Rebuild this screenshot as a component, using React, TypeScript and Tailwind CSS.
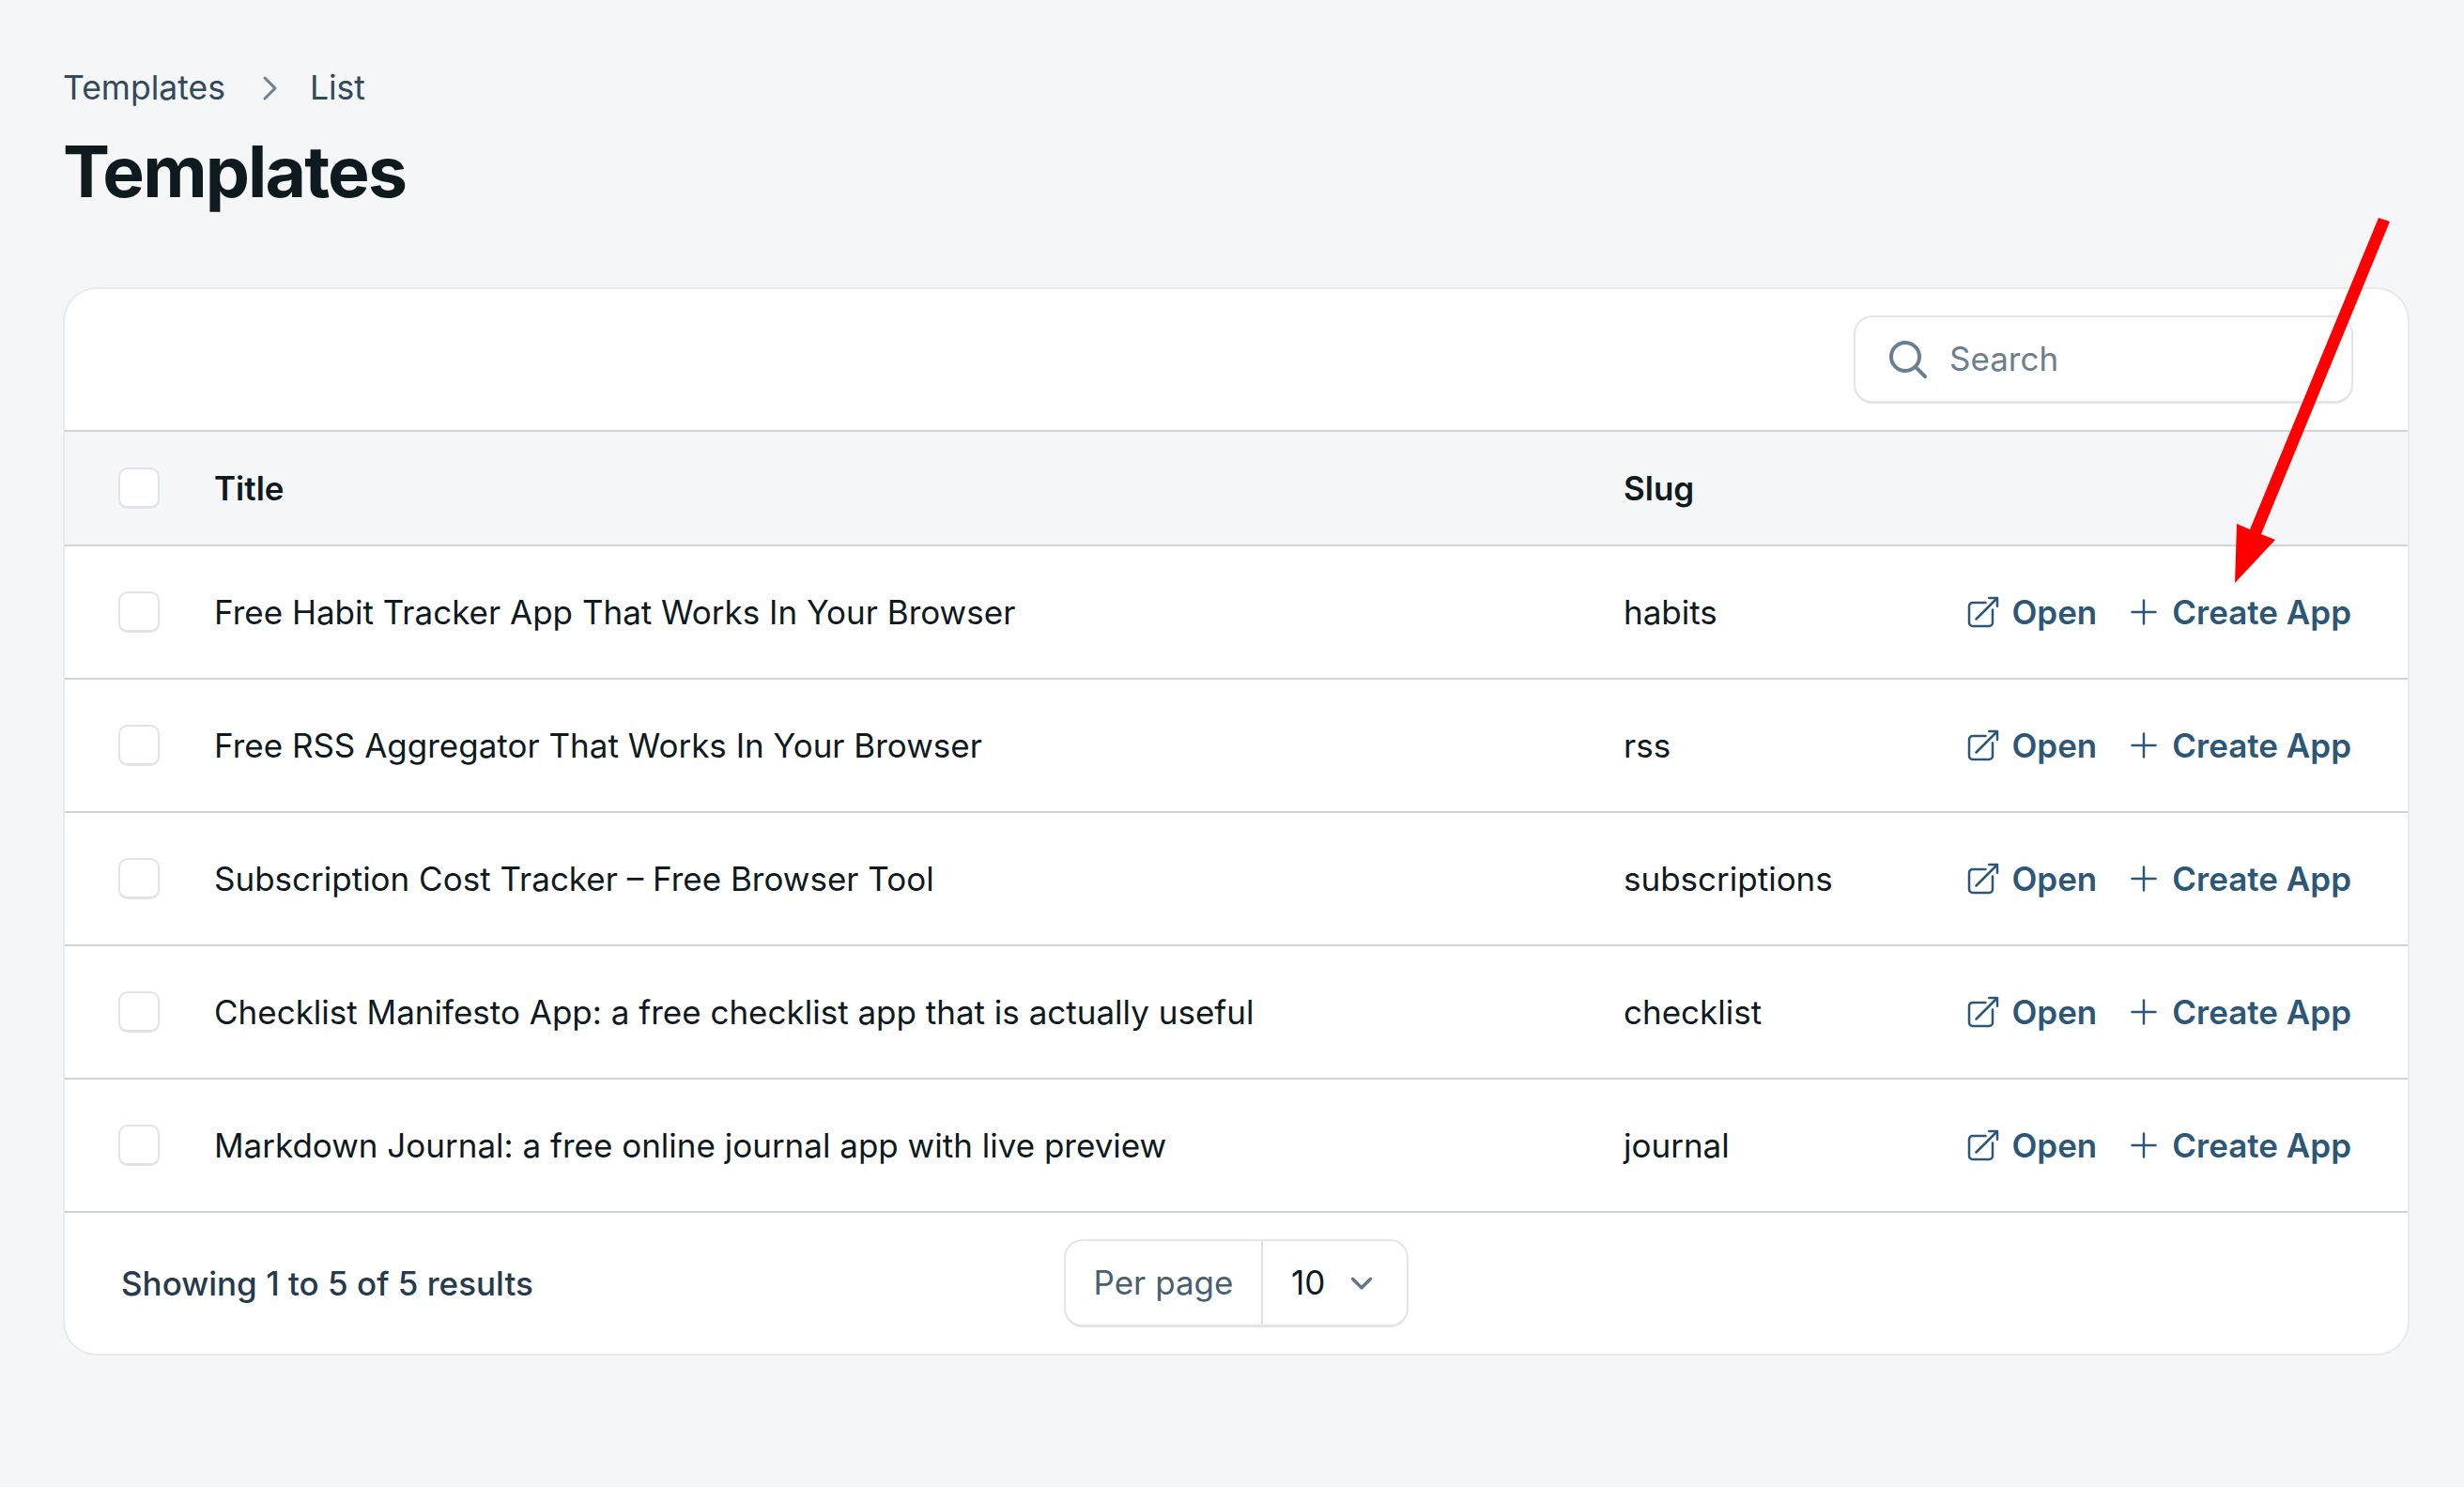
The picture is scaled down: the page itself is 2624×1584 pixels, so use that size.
const rows = [
  { title: "Free Habit Tracker App That Works In Your Browser", slug: "habits" },
  { title: "Free RSS Aggregator That Works In Your Browser", slug: "rss" },
  { title: "Subscription Cost Tracker – Free Browser Tool", slug: "subscriptions" },
  { title: "Checklist Manifesto App: a free checklist app that is actually useful", slug: "checklist" },
  { title: "Markdown Journal: a free online journal app with live preview", slug: "journal" },
]

function Checkbox() {
  return <div className="w-[44px] h-[44px] shrink-0 rounded-[10px] bg-white border-2 border-[#e1e3e6] border-b-[3px]" />
}

function ExternalIcon() {
  return (
    <svg viewBox="0 0 24 24" fill="none" stroke="currentColor" strokeWidth="1.5" strokeLinecap="round" strokeLinejoin="round" className="w-[40px] h-[40px] shrink-0">
      <path d="M13.5 6H5.25A2.25 2.25 0 0 0 3 8.25v10.5A2.25 2.25 0 0 0 5.25 21h10.5A2.25 2.25 0 0 0 18 18.75V10.5m-10.5 6L21 3m0 0h-5.25M21 3v5.25" />
    </svg>
  )
}

function PlusIcon() {
  return (
    <svg viewBox="0 0 24 24" fill="none" stroke="currentColor" strokeWidth="1.5" strokeLinecap="round" strokeLinejoin="round" className="w-[40px] h-[40px] shrink-0">
      <path d="M12 4.5v15m7.5-7.5h-15" />
    </svg>
  )
}

export default function App() {
  return (
    <div className="relative min-h-screen bg-[#f5f6f8] pl-[67px] pr-[58px] pt-[72px] font-['Inter',sans-serif] text-[35px] overflow-hidden">
      {/* breadcrumb */}
      <div className="flex items-center h-[44px] text-[#33495c] text-[35.5px]">
        <span>Templates</span>
        <svg viewBox="0 0 20 20" fill="none" stroke="#71808e" strokeWidth="1.5" strokeLinecap="round" strokeLinejoin="round" className="w-[40px] h-[40px] ml-[27px] mr-[23px]">
          <path d="M7.5 4.5 13 10l-5.5 5.5" />
        </svg>
        <span>List</span>
      </div>
      <h1 className="mt-[22px] h-[90px] leading-[90px] text-[75px] font-bold tracking-[-0.025em] text-[#0f1a1f]">Templates</h1>

      {/* table card */}
      <div className="mt-[78px] bg-white rounded-[36px] border-2 border-[#e8eaed] overflow-hidden">
        <div className="h-[152px] flex items-center justify-end pr-[58px] border-b-2 border-[#cfd4d9]">
          <div className="w-[532px] h-[94px] rounded-[20px] border-2 border-[#e3e5e8] border-b-[3px] flex items-center pl-[32px] gap-[20px] text-[#6b7f8e]">
            <svg viewBox="0 0 24 24" fill="none" stroke="currentColor" strokeWidth="2" strokeLinecap="round" strokeLinejoin="round" className="w-[48px] h-[48px] shrink-0">
              <path d="m21 21-5.197-5.197m0 0A7.5 7.5 0 1 0 5.196 5.196a7.5 7.5 0 0 0 10.607 10.607Z" />
            </svg>
            <span>Search</span>
          </div>
        </div>

        <div className="h-[122px] flex items-center bg-[#f5f6f8] border-b-2 border-[#cfd4d9] pl-[57px] font-semibold text-[#0f1a1f]">
          <Checkbox />
          <div className="ml-[58px] w-[1501px]">Title</div>
          <div>Slug</div>
        </div>

        {rows.map((row) => (
          <div key={row.slug} className="h-[142px] flex items-center border-b-2 border-[#cfd4d9] pl-[57px] pr-[60px] text-[#0f1a1f]">
            <Checkbox />
            <div className="ml-[58px] w-[1501px]">{row.title}</div>
            <div className="flex-1">{row.slug}</div>
            <div className="flex items-center font-semibold text-[#2d5777]">
              <ExternalIcon />
              <span className="ml-[10px]">Open</span>
              <span className="ml-[30px]"><PlusIcon /></span>
              <span className="ml-[10px]">Create App</span>
            </div>
          </div>
        ))}

        <div className="h-[150px] flex items-center pl-[60px] relative">
          <div className="w-[1004px] font-medium text-[#263b4b]">Showing 1 to 5 of 5 results</div>
          <div className="flex h-[94px] w-[367px] rounded-[20px] border-2 border-[#e3e5e8] border-b-[3px] overflow-hidden">
            <div className="w-[210px] flex items-center justify-center border-r-2 border-[#dcdfe2] text-[#4a5f70]">Per page</div>
            <div className="flex-1 flex items-center pl-[30px] text-[#0f1a1f]">
              <span>10</span>
              <svg viewBox="0 0 20 20" fill="none" stroke="#64748b" strokeWidth="1.8" strokeLinecap="round" strokeLinejoin="round" className="w-[38px] h-[38px] ml-[20px]">
                <path d="M5 7.5 10 12.5 15 7.5" />
              </svg>
            </div>
          </div>
        </div>
      </div>

      {/* red annotation arrow */}
      <svg viewBox="0 0 2624 1584" className="absolute inset-0 w-[2624px] h-[1584px] pointer-events-none">
        <polygon points="2533,232 2545,236 2408,569 2423,575 2380,621 2382,558 2396,564" fill="#ff0000" />
      </svg>
    </div>
  )
}
